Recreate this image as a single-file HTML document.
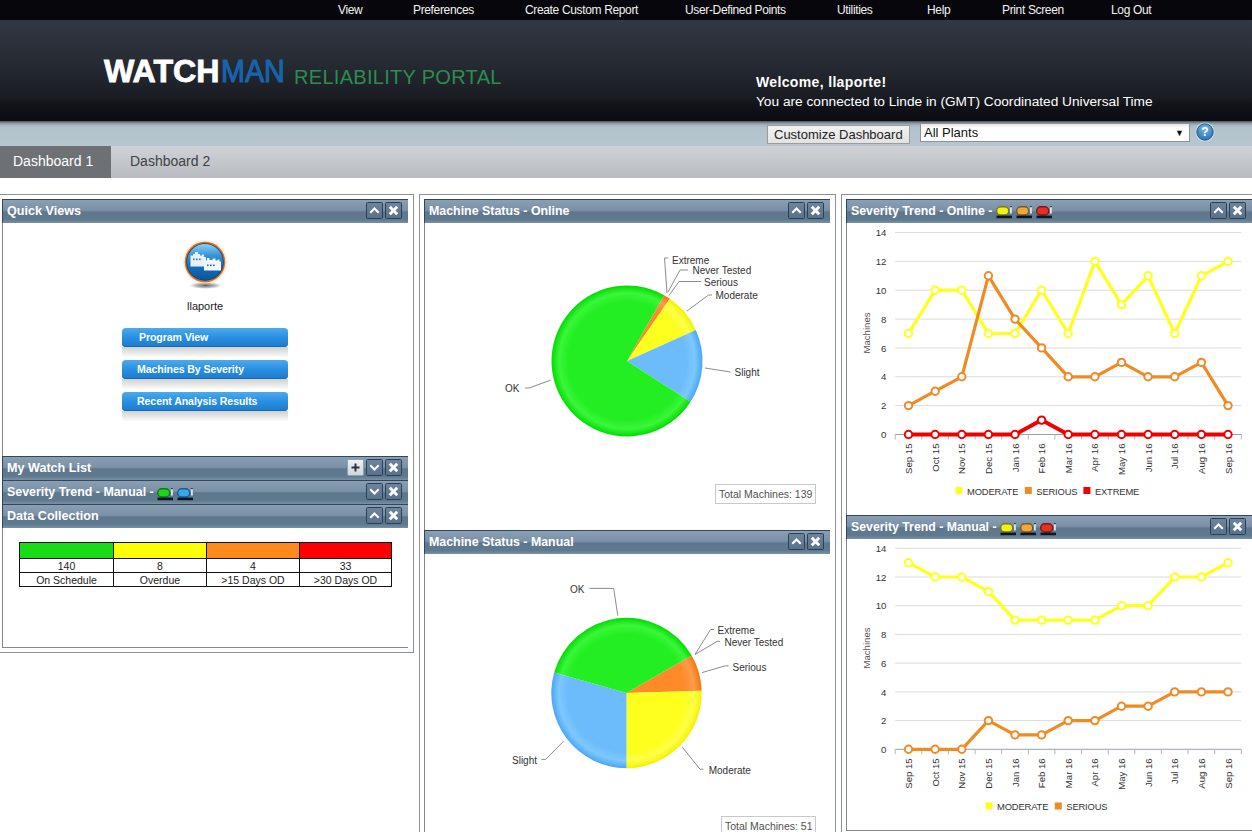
<!DOCTYPE html><html><head><meta charset="utf-8"><style>
*{box-sizing:border-box}
html,body{margin:0;padding:0}
body{width:1252px;height:832px;overflow:hidden;position:relative;background:#fff;font-family:"Liberation Sans",sans-serif}
.a{position:absolute}
#topnav{left:0;top:0;width:1252px;height:20px;background:#06060c}
#topnav span{position:absolute;top:3px;color:#f2f2f2;font-size:12px;letter-spacing:-0.35px;white-space:nowrap;line-height:14px}
#header{left:0;top:20px;width:1252px;height:101px;background:linear-gradient(#323843 0%,#272b34 40%,#1a1d23 76%,#111318 84%,#0b0c10 100%)}
#band{left:0;top:121px;width:1252px;height:25px;background:linear-gradient(#4a5258 0px,#84929a 2px,#a6b5be 4px,#b3c3cc 7px,#b6c5ce 100%)}
#tabs{left:0;top:146px;width:1252px;height:32px;background:linear-gradient(#cfd3d7,#b8bbbf)}
#tab1{left:0;top:146px;width:111px;height:32px;background:#6d7176;color:#fff;font-size:14px;line-height:30px;padding-left:13px;white-space:nowrap}
#tab2{left:130px;top:146px;color:#3f4247;font-size:14px;line-height:30px;white-space:nowrap}
.col{position:absolute;border:1px solid #8d9298;background:#fff}
.pl{position:absolute;border-left:1px solid #85898e;border-bottom:1px solid #85898e}
.ph{position:absolute;height:24px;border-top:1px solid #33475c;border-left:1px solid #33475c;background:linear-gradient(#8a9fb4 0%,#7a90a6 45%,#5f778d 52%,#5f798f 85%,#7a92a7 100%);color:#fff;font-weight:bold;font-size:12.6px;line-height:22px;padding-left:4px;white-space:nowrap}
.bt{position:absolute;top:2px;width:17px;height:17px;border:1px solid #2a3f58;border-radius:1.5px;background:linear-gradient(#6d849b,#5a7289)}
.bt svg{position:absolute;left:0;top:0}
.pt{font-size:10px;fill:#333}
</style></head><body>
<div id="topnav" class="a">
<span style="left:338px">View</span>
<span style="left:413px">Preferences</span>
<span style="left:525px">Create Custom Report</span>
<span style="left:685px">User-Defined Points</span>
<span style="left:837px">Utilities</span>
<span style="left:927px">Help</span>
<span style="left:1002px">Print Screen</span>
<span style="left:1111px">Log Out</span>
</div>
<div id="header" class="a"></div>
<div class="a" style="left:104px;top:52px;font-weight:bold;font-size:30.5px;line-height:38px;color:#fff;white-space:nowrap;-webkit-text-stroke:0.8px #fff;transform:scaleX(1.055);transform-origin:0 0">WATCH</div>
<div class="a" style="left:221px;top:52px;font-size:30.5px;line-height:38px;color:#1764aa;white-space:nowrap;-webkit-text-stroke:1.1px #1764aa;transform:scaleX(0.94);transform-origin:0 0">MAN</div>
<div class="a" style="left:294px;top:65px;font-size:20px;line-height:24px;color:#2d8c4e;letter-spacing:0.3px;white-space:nowrap">RELIABILITY PORTAL</div>
<div class="a" style="left:756px;top:74px;font-weight:bold;font-size:14px;line-height:17px;color:#fff;letter-spacing:0.35px;white-space:nowrap">Welcome, llaporte!</div>
<div class="a" style="left:756px;top:93px;font-size:13.7px;line-height:17px;color:#fff;white-space:nowrap">You are connected to Linde in (GMT) Coordinated Universal Time</div>
<div id="band" class="a"></div>
<div class="a" style="left:767px;top:125px;width:143px;height:19px;border:1px solid #9c9c9c;background:linear-gradient(#f2f2f2,#e2e2e2);font-size:13px;line-height:17px;color:#222;padding-left:6px;white-space:nowrap">Customize Dashboard</div>
<div class="a" style="left:920px;top:123px;width:270px;height:19px;border:1px solid #8e9295;background:linear-gradient(#e4e4e4 0px,#fff 4px,#fff 100%);font-size:13px;line-height:17px;color:#111;padding-left:3px;white-space:nowrap">All Plants<span style="position:absolute;right:5px;top:1px;font-size:9px">&#9660;</span></div>
<svg class="a" style="left:1195px;top:122px" width="20" height="20"><defs><radialGradient id="hg" cx="50%" cy="30%" r="65%"><stop offset="0" stop-color="#7fb8e6"/><stop offset="1" stop-color="#2d76b8"/></radialGradient></defs><circle cx="10" cy="10" r="9.5" fill="#d6e4ee"/><circle cx="10" cy="10" r="8.2" fill="url(#hg)" stroke="#21588e" stroke-width="1"/><text x="10" y="14.3" text-anchor="middle" font-family="Liberation Sans" font-weight="bold" font-size="12" fill="#fff">?</text></svg>
<div id="tabs" class="a"></div>
<div id="tab1" class="a">Dashboard 1</div>
<div id="tab2" class="a">Dashboard 2</div>
<div class="col" style="left:-1px;top:194px;width:415px;height:459px"></div>
<div class="col" style="left:419px;top:194px;width:417px;height:660px"></div>
<div class="col" style="left:841px;top:194px;width:420px;height:660px"></div>
<div class="pl" style="left:2px;top:199px;width:406px;height:449px"></div>
<div class="pl" style="left:424px;top:199px;width:406px;height:700px"></div>
<div class="pl" style="left:846px;top:199px;width:420px;height:632px"></div>
<div class="ph" style="left:2px;top:199px;width:406px;height:24px;font-size:12.6px">Quick Views<div class="bt" style="left:363px"><svg width="15" height="15"><path d="M4 9 L7.5 5.5 L11 9" stroke="#fff" stroke-width="2" fill="none" stroke-linecap="square"/></svg></div><div class="bt" style="left:382px"><svg width="15" height="15"><path d="M3.8 3.8 L11.2 11.2 M11.2 3.8 L3.8 11.2" stroke="#fff" stroke-width="2.9" fill="none" stroke-linecap="butt"/></svg></div></div>
<div class="ph" style="left:2px;top:456px;width:406px;height:24px;font-size:12.6px">My Watch List<div class="bt" style="left:344px;background:linear-gradient(#eef1f4,#cfd6dd);border-color:#8fa0b2"><svg width="15" height="15"><path d="M7.5 3.5 V11.5 M3.5 7.5 H11.5" stroke="#2a3440" stroke-width="2" fill="none"/></svg></div><div class="bt" style="left:363px"><svg width="15" height="15"><path d="M4 6 L7.5 9.5 L11 6" stroke="#fff" stroke-width="2" fill="none" stroke-linecap="square"/></svg></div><div class="bt" style="left:382px"><svg width="15" height="15"><path d="M3.8 3.8 L11.2 11.2 M11.2 3.8 L3.8 11.2" stroke="#fff" stroke-width="2.9" fill="none" stroke-linecap="butt"/></svg></div></div>
<div class="ph" style="left:2px;top:480px;width:406px;height:24px;font-size:12.4px">Severity Trend - Manual -<svg class="a" style="left:154px;top:7px" width="18" height="14"><rect x="0.7" y="0.7" width="12" height="8.3" rx="4" fill="#1ed21e" stroke="#0f7a1a" stroke-width="1.4"/><rect x="14" y="1" width="1.8" height="6.5" fill="#dde3ea"/><rect x="14" y="0" width="1.8" height="1.2" fill="#2a3a4a"/><rect x="0.5" y="9.6" width="15.5" height="2.6" fill="#0a1626"/></svg><svg class="a" style="left:174px;top:7px" width="18" height="14"><rect x="0.7" y="0.7" width="12" height="8.3" rx="4" fill="#3aa6ea" stroke="#1a5a95" stroke-width="1.4"/><rect x="14" y="1" width="1.8" height="6.5" fill="#dde3ea"/><rect x="14" y="0" width="1.8" height="1.2" fill="#2a3a4a"/><rect x="0.5" y="9.6" width="15.5" height="2.6" fill="#0a1626"/></svg><div class="bt" style="left:363px"><svg width="15" height="15"><path d="M4 6 L7.5 9.5 L11 6" stroke="#fff" stroke-width="2" fill="none" stroke-linecap="square"/></svg></div><div class="bt" style="left:382px"><svg width="15" height="15"><path d="M3.8 3.8 L11.2 11.2 M11.2 3.8 L3.8 11.2" stroke="#fff" stroke-width="2.9" fill="none" stroke-linecap="butt"/></svg></div></div>
<div class="ph" style="left:2px;top:504px;width:406px;height:24px;font-size:12.6px">Data Collection<div class="bt" style="left:363px"><svg width="15" height="15"><path d="M4 9 L7.5 5.5 L11 9" stroke="#fff" stroke-width="2" fill="none" stroke-linecap="square"/></svg></div><div class="bt" style="left:382px"><svg width="15" height="15"><path d="M3.8 3.8 L11.2 11.2 M11.2 3.8 L3.8 11.2" stroke="#fff" stroke-width="2.9" fill="none" stroke-linecap="butt"/></svg></div></div>
<svg class="a" style="left:180px;top:236px" width="52" height="56">
<defs>
<linearGradient id="gb" x1="0" y1="0" x2="0" y2="1"><stop offset="0" stop-color="#8ccff2"/><stop offset="0.3" stop-color="#3a98d8"/><stop offset="0.55" stop-color="#1676c0"/><stop offset="1" stop-color="#0a549a"/></linearGradient>
<radialGradient id="gs" cx="50%" cy="50%" r="50%"><stop offset="0" stop-color="#444" stop-opacity="0.85"/><stop offset="0.6" stop-color="#777" stop-opacity="0.5"/><stop offset="1" stop-color="#aaa" stop-opacity="0"/></radialGradient>
<radialGradient id="gg" cx="50%" cy="50%" r="50%"><stop offset="0.85" stop-color="#f09040" stop-opacity="0.35"/><stop offset="1" stop-color="#f09040" stop-opacity="0"/></radialGradient>
</defs>
<ellipse cx="25.5" cy="49.5" rx="17" ry="3.5" fill="url(#gs)"/>
<circle cx="25" cy="26" r="23" fill="url(#gg)"/>
<circle cx="25" cy="26" r="20.2" fill="#d27028"/>
<circle cx="25" cy="26" r="18.8" fill="#0f3f6e"/>
<circle cx="25" cy="26" r="18" fill="url(#gb)"/>
<path d="M10.5 19.5 h2.5 v-1.5 h2 v-2 h3 v2 h2 v1.5 h2 v-1 h2 v2.5 h2 v9.5 h-15.5 z" fill="#e6f1f9"/>
<path d="M24 24.5 h3 v-2.5 h2.5 v2 h3 v-1.5 h3 v2 h2 v-1 h2 v2 h1.5 v9 h-17 z" fill="#f2f7fb"/>
<rect x="13" y="22.5" width="1.6" height="1.6" fill="#3a6f9a"/><rect x="16" y="22.5" width="1.6" height="1.6" fill="#3a6f9a"/><rect x="19" y="22.5" width="1.6" height="1.6" fill="#3a6f9a"/>
<rect x="27" y="28.5" width="1.6" height="1.6" fill="#3a6f9a"/><rect x="30" y="28.5" width="1.6" height="1.6" fill="#3a6f9a"/><rect x="33" y="28.5" width="1.6" height="1.6" fill="#3a6f9a"/>
</svg>
<div class="a" style="left:187px;top:300px;font-size:11px;line-height:13px;color:#222;white-space:nowrap">llaporte</div>
<div class="a" style="left:122px;top:347px;width:166px;height:11px;background:linear-gradient(rgba(170,170,170,0.55),rgba(255,255,255,0));border-radius:0 0 3px 3px"></div>
<div class="a" style="left:122px;top:328px;width:166px;height:19px;border-radius:4px;background:linear-gradient(#4aaaf0 0%,#2a8fe0 50%,#1a7cd0 100%);box-shadow:inset 0 -1px 0 #1667b0;color:#fff;font-weight:bold;font-size:10.6px;line-height:18px;padding-left:17px;white-space:nowrap;letter-spacing:-0.1px">Program View</div>
<div class="a" style="left:122px;top:379px;width:166px;height:11px;background:linear-gradient(rgba(170,170,170,0.55),rgba(255,255,255,0));border-radius:0 0 3px 3px"></div>
<div class="a" style="left:122px;top:360px;width:166px;height:19px;border-radius:4px;background:linear-gradient(#4aaaf0 0%,#2a8fe0 50%,#1a7cd0 100%);box-shadow:inset 0 -1px 0 #1667b0;color:#fff;font-weight:bold;font-size:10.6px;line-height:18px;padding-left:15px;white-space:nowrap;letter-spacing:-0.1px">Machines By Severity</div>
<div class="a" style="left:122px;top:411px;width:166px;height:11px;background:linear-gradient(rgba(170,170,170,0.55),rgba(255,255,255,0));border-radius:0 0 3px 3px"></div>
<div class="a" style="left:122px;top:392px;width:166px;height:19px;border-radius:4px;background:linear-gradient(#4aaaf0 0%,#2a8fe0 50%,#1a7cd0 100%);box-shadow:inset 0 -1px 0 #1667b0;color:#fff;font-weight:bold;font-size:10.6px;line-height:18px;padding-left:15px;white-space:nowrap;letter-spacing:-0.1px">Recent Analysis Results</div>
<table class="a" style="left:19px;top:542px;width:373px;border-collapse:collapse;font-size:10.5px;color:#222;text-align:center">
<tr style="height:16px"><td style="border:1px solid #111;background:#17dc17;width:94px"></td><td style="border:1px solid #111;background:#ffff00;width:93px"></td><td style="border:1px solid #111;background:#ff8a1c;width:93px"></td><td style="border:1px solid #111;background:#ff0000"></td></tr>
<tr style="height:14px"><td style="border:1px solid #111;padding:0;line-height:12px">140</td><td style="border:1px solid #111;padding:0;line-height:12px">8</td><td style="border:1px solid #111;padding:0;line-height:12px">4</td><td style="border:1px solid #111;padding:0;line-height:12px">33</td></tr>
<tr style="height:14px"><td style="border:1px solid #111;padding:0;line-height:12px">On Schedule</td><td style="border:1px solid #111;padding:0;line-height:12px">Overdue</td><td style="border:1px solid #111;padding:0;line-height:12px">&gt;15 Days OD</td><td style="border:1px solid #111;padding:0;line-height:12px">&gt;30 Days OD</td></tr>
</table>
<div class="ph" style="left:424px;top:199px;width:406px;height:24px;font-size:12.4px">Machine Status - Online<div class="bt" style="left:363px"><svg width="15" height="15"><path d="M4 9 L7.5 5.5 L11 9" stroke="#fff" stroke-width="2" fill="none" stroke-linecap="square"/></svg></div><div class="bt" style="left:382px"><svg width="15" height="15"><path d="M3.8 3.8 L11.2 11.2 M11.2 3.8 L3.8 11.2" stroke="#fff" stroke-width="2.9" fill="none" stroke-linecap="butt"/></svg></div></div>
<div class="ph" style="left:424px;top:530px;width:406px;height:24px;font-size:12.4px">Machine Status - Manual<div class="bt" style="left:363px"><svg width="15" height="15"><path d="M4 9 L7.5 5.5 L11 9" stroke="#fff" stroke-width="2" fill="none" stroke-linecap="square"/></svg></div><div class="bt" style="left:382px"><svg width="15" height="15"><path d="M3.8 3.8 L11.2 11.2 M11.2 3.8 L3.8 11.2" stroke="#fff" stroke-width="2.9" fill="none" stroke-linecap="butt"/></svg></div></div>
<svg class="a" style="left:0;top:0" width="1252" height="832" overflow="visible"><defs><radialGradient id="p361ok" gradientUnits="userSpaceOnUse" cx="627" cy="361" r="75.5"><stop offset="0" stop-color="#22ee22"/><stop offset="0.78" stop-color="#22ee22"/><stop offset="0.9" stop-color="#3af63a"/><stop offset="1" stop-color="#02dc02"/></radialGradient><radialGradient id="p361slight" gradientUnits="userSpaceOnUse" cx="627" cy="361" r="75.5"><stop offset="0" stop-color="#6cbbfb"/><stop offset="0.78" stop-color="#6cbbfb"/><stop offset="0.9" stop-color="#7cc8ff"/><stop offset="1" stop-color="#4aa6f2"/></radialGradient><radialGradient id="p361moderate" gradientUnits="userSpaceOnUse" cx="627" cy="361" r="75.5"><stop offset="0" stop-color="#ffff1e"/><stop offset="0.78" stop-color="#ffff1e"/><stop offset="0.9" stop-color="#ffff4a"/><stop offset="1" stop-color="#f2f200"/></radialGradient><radialGradient id="p361serious" gradientUnits="userSpaceOnUse" cx="627" cy="361" r="75.5"><stop offset="0" stop-color="#ff8a2a"/><stop offset="0.78" stop-color="#ff8a2a"/><stop offset="0.9" stop-color="#ff9c48"/><stop offset="1" stop-color="#f27610"/></radialGradient></defs><path d="M627,361 L664.06,295.22 A75.5,75.5 0 0 1 669.85,298.84 Z" fill="url(#p361serious)"/><path d="M627,361 L669.85,298.84 A75.5,75.5 0 0 1 695.79,329.88 Z" fill="url(#p361moderate)"/><path d="M627,361 L695.79,329.88 A75.5,75.5 0 0 1 690.58,401.72 Z" fill="url(#p361slight)"/><path d="M627,361 L690.58,401.72 A75.5,75.5 0 1 1 664.06,295.22 Z" fill="url(#p361ok)"/><path d="M667,293 L664.5,258 L668,258" stroke="#8c8c8c" stroke-width="1" fill="none"/><text x="672" y="263.6" class="pt" font-family="Liberation Sans">Extreme</text><path d="M668,292 L680,270 L688,270" stroke="#8c8c8c" stroke-width="1" fill="none"/><text x="692.5" y="274.1" class="pt" font-family="Liberation Sans">Never Tested</text><path d="M669,295.5 L679,281.5 L701,281.5" stroke="#8c8c8c" stroke-width="1" fill="none"/><text x="704" y="286.3" class="pt" font-family="Liberation Sans">Serious</text><path d="M687,311 L708.5,295 L712,295" stroke="#8c8c8c" stroke-width="1" fill="none"/><text x="715.5" y="299.0" class="pt" font-family="Liberation Sans">Moderate</text><path d="M705,368 L730.5,372" stroke="#8c8c8c" stroke-width="1" fill="none"/><text x="734.5" y="376.40000000000003" class="pt" font-family="Liberation Sans">Slight</text><path d="M550.6,380.2 L529,388 L525,388" stroke="#8c8c8c" stroke-width="1" fill="none"/><text x="505" y="392.3" class="pt" font-family="Liberation Sans">OK</text><rect x="715.5" y="484.5" width="100" height="19" fill="#fff" stroke="#c8c8c8"/><text x="719" y="498" font-family="Liberation Sans" font-size="10.5" fill="#505050">Total Machines: 139</text></svg>
<svg class="a" style="left:0;top:0" width="1252" height="832" overflow="visible"><defs><radialGradient id="p693ok" gradientUnits="userSpaceOnUse" cx="626.5" cy="693" r="75.2"><stop offset="0" stop-color="#22ee22"/><stop offset="0.78" stop-color="#22ee22"/><stop offset="0.9" stop-color="#3af63a"/><stop offset="1" stop-color="#02dc02"/></radialGradient><radialGradient id="p693slight" gradientUnits="userSpaceOnUse" cx="626.5" cy="693" r="75.2"><stop offset="0" stop-color="#6cbbfb"/><stop offset="0.78" stop-color="#6cbbfb"/><stop offset="0.9" stop-color="#7cc8ff"/><stop offset="1" stop-color="#4aa6f2"/></radialGradient><radialGradient id="p693moderate" gradientUnits="userSpaceOnUse" cx="626.5" cy="693" r="75.2"><stop offset="0" stop-color="#ffff1e"/><stop offset="0.78" stop-color="#ffff1e"/><stop offset="0.9" stop-color="#ffff4a"/><stop offset="1" stop-color="#f2f200"/></radialGradient><radialGradient id="p693serious" gradientUnits="userSpaceOnUse" cx="626.5" cy="693" r="75.2"><stop offset="0" stop-color="#ff8a2a"/><stop offset="0.78" stop-color="#ff8a2a"/><stop offset="0.9" stop-color="#ff9c48"/><stop offset="1" stop-color="#f27610"/></radialGradient></defs><path d="M626.5,693 L691.63,655.40 A75.2,75.2 0 0 1 701.66,690.68 Z" fill="url(#p693serious)"/><path d="M626.5,693 L701.66,690.68 A75.2,75.2 0 0 1 626.50,768.20 Z" fill="url(#p693moderate)"/><path d="M626.5,693 L626.50,768.20 A75.2,75.2 0 0 1 554.17,672.42 Z" fill="url(#p693slight)"/><path d="M626.5,693 L554.17,672.42 A75.2,75.2 0 0 1 691.63,655.40 Z" fill="url(#p693ok)"/><path d="M617.8,615.6 L613.7,588.4 L589.4,588.4" stroke="#8c8c8c" stroke-width="1" fill="none"/><text x="570" y="593.2" class="pt" font-family="Liberation Sans">OK</text><path d="M695,654.5 L710.5,629.5 L714,629.5" stroke="#8c8c8c" stroke-width="1" fill="none"/><text x="717.5" y="634.2" class="pt" font-family="Liberation Sans">Extreme</text><path d="M695,654.5 L717,641.4 L720,641.4" stroke="#8c8c8c" stroke-width="1" fill="none"/><text x="724.5" y="646.4" class="pt" font-family="Liberation Sans">Never Tested</text><path d="M702,672.6 L725.4,665.8 L728.5,665.8" stroke="#8c8c8c" stroke-width="1" fill="none"/><text x="732.5" y="670.5" class="pt" font-family="Liberation Sans">Serious</text><path d="M563.6,741.2 L545.7,759.4 L541.5,759.4" stroke="#8c8c8c" stroke-width="1" fill="none"/><text x="512" y="764.1" class="pt" font-family="Liberation Sans">Slight</text><path d="M682.4,747.2 L700,769.2 L703.5,769.2" stroke="#8c8c8c" stroke-width="1" fill="none"/><text x="708.7" y="774.1" class="pt" font-family="Liberation Sans">Moderate</text><rect x="721.5" y="816.5" width="94" height="19" fill="#fff" stroke="#c8c8c8"/><text x="725" y="830" font-family="Liberation Sans" font-size="10.5" fill="#505050">Total Machines: 51</text></svg>
<div class="ph" style="left:846px;top:199px;width:410px;height:24px;font-size:12.3px">Severity Trend - Online -<svg class="a" style="left:149px;top:6px" width="18" height="14"><rect x="0.7" y="0.7" width="12" height="8.3" rx="4" fill="#f0f020" stroke="#7a7a10" stroke-width="1.4"/><rect x="14" y="1" width="1.8" height="6.5" fill="#dde3ea"/><rect x="14" y="0" width="1.8" height="1.2" fill="#2a3a4a"/><rect x="0.5" y="9.6" width="15.5" height="2.6" fill="#0a1626"/></svg><svg class="a" style="left:169px;top:6px" width="18" height="14"><rect x="0.7" y="0.7" width="12" height="8.3" rx="4" fill="#f0a838" stroke="#7a5a20" stroke-width="1.4"/><rect x="14" y="1" width="1.8" height="6.5" fill="#dde3ea"/><rect x="14" y="0" width="1.8" height="1.2" fill="#2a3a4a"/><rect x="0.5" y="9.6" width="15.5" height="2.6" fill="#0a1626"/></svg><svg class="a" style="left:189px;top:6px" width="18" height="14"><rect x="0.7" y="0.7" width="12" height="8.3" rx="4" fill="#e83020" stroke="#7a1a10" stroke-width="1.4"/><rect x="14" y="1" width="1.8" height="6.5" fill="#dde3ea"/><rect x="14" y="0" width="1.8" height="1.2" fill="#2a3a4a"/><rect x="0.5" y="9.6" width="15.5" height="2.6" fill="#0a1626"/></svg><div class="bt" style="left:363px"><svg width="15" height="15"><path d="M4 9 L7.5 5.5 L11 9" stroke="#fff" stroke-width="2" fill="none" stroke-linecap="square"/></svg></div><div class="bt" style="left:382px"><svg width="15" height="15"><path d="M3.8 3.8 L11.2 11.2 M11.2 3.8 L3.8 11.2" stroke="#fff" stroke-width="2.9" fill="none" stroke-linecap="butt"/></svg></div></div>
<div class="ph" style="left:846px;top:515px;width:410px;height:24px;font-size:12.3px">Severity Trend - Manual -<svg class="a" style="left:153px;top:7px" width="18" height="14"><rect x="0.7" y="0.7" width="12" height="8.3" rx="4" fill="#f0f020" stroke="#7a7a10" stroke-width="1.4"/><rect x="14" y="1" width="1.8" height="6.5" fill="#dde3ea"/><rect x="14" y="0" width="1.8" height="1.2" fill="#2a3a4a"/><rect x="0.5" y="9.6" width="15.5" height="2.6" fill="#0a1626"/></svg><svg class="a" style="left:173px;top:7px" width="18" height="14"><rect x="0.7" y="0.7" width="12" height="8.3" rx="4" fill="#f0a838" stroke="#7a5a20" stroke-width="1.4"/><rect x="14" y="1" width="1.8" height="6.5" fill="#dde3ea"/><rect x="14" y="0" width="1.8" height="1.2" fill="#2a3a4a"/><rect x="0.5" y="9.6" width="15.5" height="2.6" fill="#0a1626"/></svg><svg class="a" style="left:193px;top:7px" width="18" height="14"><rect x="0.7" y="0.7" width="12" height="8.3" rx="4" fill="#e83020" stroke="#7a1a10" stroke-width="1.4"/><rect x="14" y="1" width="1.8" height="6.5" fill="#dde3ea"/><rect x="14" y="0" width="1.8" height="1.2" fill="#2a3a4a"/><rect x="0.5" y="9.6" width="15.5" height="2.6" fill="#0a1626"/></svg><div class="bt" style="left:363px"><svg width="15" height="15"><path d="M4 9 L7.5 5.5 L11 9" stroke="#fff" stroke-width="2" fill="none" stroke-linecap="square"/></svg></div><div class="bt" style="left:382px"><svg width="15" height="15"><path d="M3.8 3.8 L11.2 11.2 M11.2 3.8 L3.8 11.2" stroke="#fff" stroke-width="2.9" fill="none" stroke-linecap="butt"/></svg></div></div>
<svg class="a" style="left:0;top:0" width="1252" height="832"><text x="886.3" y="438.1" text-anchor="end" font-family="Liberation Sans" font-size="9.6" fill="#333">0</text><line x1="895.2" y1="405.6" x2="1241.3" y2="405.6" stroke="#dcdcdc" stroke-width="1"/><text x="886.3" y="409.2" text-anchor="end" font-family="Liberation Sans" font-size="9.6" fill="#333">2</text><line x1="895.2" y1="376.8" x2="1241.3" y2="376.8" stroke="#dcdcdc" stroke-width="1"/><text x="886.3" y="380.4" text-anchor="end" font-family="Liberation Sans" font-size="9.6" fill="#333">4</text><line x1="895.2" y1="347.9" x2="1241.3" y2="347.9" stroke="#dcdcdc" stroke-width="1"/><text x="886.3" y="351.5" text-anchor="end" font-family="Liberation Sans" font-size="9.6" fill="#333">6</text><line x1="895.2" y1="319.1" x2="1241.3" y2="319.1" stroke="#dcdcdc" stroke-width="1"/><text x="886.3" y="322.7" text-anchor="end" font-family="Liberation Sans" font-size="9.6" fill="#333">8</text><line x1="895.2" y1="290.2" x2="1241.3" y2="290.2" stroke="#dcdcdc" stroke-width="1"/><text x="886.3" y="293.8" text-anchor="end" font-family="Liberation Sans" font-size="9.6" fill="#333">10</text><line x1="895.2" y1="261.4" x2="1241.3" y2="261.4" stroke="#dcdcdc" stroke-width="1"/><text x="886.3" y="265.0" text-anchor="end" font-family="Liberation Sans" font-size="9.6" fill="#333">12</text><line x1="895.2" y1="232.5" x2="1241.3" y2="232.5" stroke="#dcdcdc" stroke-width="1"/><text x="886.3" y="236.1" text-anchor="end" font-family="Liberation Sans" font-size="9.6" fill="#333">14</text><line x1="895.2" y1="434.5" x2="1241.3" y2="434.5" stroke="#9aa0a8" stroke-width="1"/><line x1="895.2" y1="434.5" x2="895.2" y2="439.5" stroke="#b4b8bd" stroke-width="1"/><line x1="921.8" y1="434.5" x2="921.8" y2="439.5" stroke="#b4b8bd" stroke-width="1"/><line x1="948.4" y1="434.5" x2="948.4" y2="439.5" stroke="#b4b8bd" stroke-width="1"/><line x1="975.1" y1="434.5" x2="975.1" y2="439.5" stroke="#b4b8bd" stroke-width="1"/><line x1="1001.7" y1="434.5" x2="1001.7" y2="439.5" stroke="#b4b8bd" stroke-width="1"/><line x1="1028.3" y1="434.5" x2="1028.3" y2="439.5" stroke="#b4b8bd" stroke-width="1"/><line x1="1054.9" y1="434.5" x2="1054.9" y2="439.5" stroke="#b4b8bd" stroke-width="1"/><line x1="1081.6" y1="434.5" x2="1081.6" y2="439.5" stroke="#b4b8bd" stroke-width="1"/><line x1="1108.2" y1="434.5" x2="1108.2" y2="439.5" stroke="#b4b8bd" stroke-width="1"/><line x1="1134.8" y1="434.5" x2="1134.8" y2="439.5" stroke="#b4b8bd" stroke-width="1"/><line x1="1161.4" y1="434.5" x2="1161.4" y2="439.5" stroke="#b4b8bd" stroke-width="1"/><line x1="1188.1" y1="434.5" x2="1188.1" y2="439.5" stroke="#b4b8bd" stroke-width="1"/><line x1="1214.7" y1="434.5" x2="1214.7" y2="439.5" stroke="#b4b8bd" stroke-width="1"/><line x1="1241.3" y1="434.5" x2="1241.3" y2="439.5" stroke="#b4b8bd" stroke-width="1"/><text transform="translate(912.0,443.5) rotate(-90)" text-anchor="end" font-family="Liberation Sans" font-size="9.6" fill="#333">Sep 15</text><text transform="translate(938.6,443.5) rotate(-90)" text-anchor="end" font-family="Liberation Sans" font-size="9.6" fill="#333">Oct 15</text><text transform="translate(965.3,443.5) rotate(-90)" text-anchor="end" font-family="Liberation Sans" font-size="9.6" fill="#333">Nov 15</text><text transform="translate(991.9,443.5) rotate(-90)" text-anchor="end" font-family="Liberation Sans" font-size="9.6" fill="#333">Dec 15</text><text transform="translate(1018.5,443.5) rotate(-90)" text-anchor="end" font-family="Liberation Sans" font-size="9.6" fill="#333">Jan 16</text><text transform="translate(1045.1,443.5) rotate(-90)" text-anchor="end" font-family="Liberation Sans" font-size="9.6" fill="#333">Feb 16</text><text transform="translate(1071.8,443.5) rotate(-90)" text-anchor="end" font-family="Liberation Sans" font-size="9.6" fill="#333">Mar 16</text><text transform="translate(1098.4,443.5) rotate(-90)" text-anchor="end" font-family="Liberation Sans" font-size="9.6" fill="#333">Apr 16</text><text transform="translate(1125.0,443.5) rotate(-90)" text-anchor="end" font-family="Liberation Sans" font-size="9.6" fill="#333">May 16</text><text transform="translate(1151.6,443.5) rotate(-90)" text-anchor="end" font-family="Liberation Sans" font-size="9.6" fill="#333">Jun 16</text><text transform="translate(1178.2,443.5) rotate(-90)" text-anchor="end" font-family="Liberation Sans" font-size="9.6" fill="#333">Jul 16</text><text transform="translate(1204.9,443.5) rotate(-90)" text-anchor="end" font-family="Liberation Sans" font-size="9.6" fill="#333">Aug 16</text><text transform="translate(1231.5,443.5) rotate(-90)" text-anchor="end" font-family="Liberation Sans" font-size="9.6" fill="#333">Sep 16</text><text transform="translate(870,333) rotate(-90)" text-anchor="middle" font-family="Liberation Sans" font-size="9.6" fill="#555">Machines</text><path d="M908.5,333.5 L935.1,290.2 L961.8,290.2 L988.4,333.5 L1015.0,333.5 L1041.6,290.2 L1068.2,333.5 L1094.9,261.4 L1121.5,304.6 L1148.1,275.8 L1174.7,333.5 L1201.4,275.8 L1228.0,261.4" stroke="#ffff1e" stroke-width="3.2" fill="none" stroke-linejoin="round"/><circle cx="908.5" cy="333.5" r="3.7" fill="#fff" stroke="#ffff1e" stroke-width="2"/><circle cx="935.1" cy="290.2" r="3.7" fill="#fff" stroke="#ffff1e" stroke-width="2"/><circle cx="961.8" cy="290.2" r="3.7" fill="#fff" stroke="#ffff1e" stroke-width="2"/><circle cx="988.4" cy="333.5" r="3.7" fill="#fff" stroke="#ffff1e" stroke-width="2"/><circle cx="1015.0" cy="333.5" r="3.7" fill="#fff" stroke="#ffff1e" stroke-width="2"/><circle cx="1041.6" cy="290.2" r="3.7" fill="#fff" stroke="#ffff1e" stroke-width="2"/><circle cx="1068.2" cy="333.5" r="3.7" fill="#fff" stroke="#ffff1e" stroke-width="2"/><circle cx="1094.9" cy="261.4" r="3.7" fill="#fff" stroke="#ffff1e" stroke-width="2"/><circle cx="1121.5" cy="304.6" r="3.7" fill="#fff" stroke="#ffff1e" stroke-width="2"/><circle cx="1148.1" cy="275.8" r="3.7" fill="#fff" stroke="#ffff1e" stroke-width="2"/><circle cx="1174.7" cy="333.5" r="3.7" fill="#fff" stroke="#ffff1e" stroke-width="2"/><circle cx="1201.4" cy="275.8" r="3.7" fill="#fff" stroke="#ffff1e" stroke-width="2"/><circle cx="1228.0" cy="261.4" r="3.7" fill="#fff" stroke="#ffff1e" stroke-width="2"/><path d="M908.5,405.6 L935.1,391.2 L961.8,376.8 L988.4,275.8 L1015.0,319.1 L1041.6,347.9 L1068.2,376.8 L1094.9,376.8 L1121.5,362.4 L1148.1,376.8 L1174.7,376.8 L1201.4,362.4 L1228.0,405.6" stroke="#f08a24" stroke-width="3.2" fill="none" stroke-linejoin="round"/><circle cx="908.5" cy="405.6" r="3.7" fill="#fff" stroke="#f08a24" stroke-width="2"/><circle cx="935.1" cy="391.2" r="3.7" fill="#fff" stroke="#f08a24" stroke-width="2"/><circle cx="961.8" cy="376.8" r="3.7" fill="#fff" stroke="#f08a24" stroke-width="2"/><circle cx="988.4" cy="275.8" r="3.7" fill="#fff" stroke="#f08a24" stroke-width="2"/><circle cx="1015.0" cy="319.1" r="3.7" fill="#fff" stroke="#f08a24" stroke-width="2"/><circle cx="1041.6" cy="347.9" r="3.7" fill="#fff" stroke="#f08a24" stroke-width="2"/><circle cx="1068.2" cy="376.8" r="3.7" fill="#fff" stroke="#f08a24" stroke-width="2"/><circle cx="1094.9" cy="376.8" r="3.7" fill="#fff" stroke="#f08a24" stroke-width="2"/><circle cx="1121.5" cy="362.4" r="3.7" fill="#fff" stroke="#f08a24" stroke-width="2"/><circle cx="1148.1" cy="376.8" r="3.7" fill="#fff" stroke="#f08a24" stroke-width="2"/><circle cx="1174.7" cy="376.8" r="3.7" fill="#fff" stroke="#f08a24" stroke-width="2"/><circle cx="1201.4" cy="362.4" r="3.7" fill="#fff" stroke="#f08a24" stroke-width="2"/><circle cx="1228.0" cy="405.6" r="3.7" fill="#fff" stroke="#f08a24" stroke-width="2"/><path d="M908.5,434.5 L935.1,434.5 L961.8,434.5 L988.4,434.5 L1015.0,434.5 L1041.6,420.1 L1068.2,434.5 L1094.9,434.5 L1121.5,434.5 L1148.1,434.5 L1174.7,434.5 L1201.4,434.5 L1228.0,434.5" stroke="#f20000" stroke-width="4" fill="none" stroke-linejoin="round"/><circle cx="908.5" cy="434.5" r="3.7" fill="#fff" stroke="#f20000" stroke-width="2"/><circle cx="935.1" cy="434.5" r="3.7" fill="#fff" stroke="#f20000" stroke-width="2"/><circle cx="961.8" cy="434.5" r="3.7" fill="#fff" stroke="#f20000" stroke-width="2"/><circle cx="988.4" cy="434.5" r="3.7" fill="#fff" stroke="#f20000" stroke-width="2"/><circle cx="1015.0" cy="434.5" r="3.7" fill="#fff" stroke="#f20000" stroke-width="2"/><circle cx="1041.6" cy="420.1" r="3.7" fill="#fff" stroke="#f20000" stroke-width="2"/><circle cx="1068.2" cy="434.5" r="3.7" fill="#fff" stroke="#f20000" stroke-width="2"/><circle cx="1094.9" cy="434.5" r="3.7" fill="#fff" stroke="#f20000" stroke-width="2"/><circle cx="1121.5" cy="434.5" r="3.7" fill="#fff" stroke="#f20000" stroke-width="2"/><circle cx="1148.1" cy="434.5" r="3.7" fill="#fff" stroke="#f20000" stroke-width="2"/><circle cx="1174.7" cy="434.5" r="3.7" fill="#fff" stroke="#f20000" stroke-width="2"/><circle cx="1201.4" cy="434.5" r="3.7" fill="#fff" stroke="#f20000" stroke-width="2"/><circle cx="1228.0" cy="434.5" r="3.7" fill="#fff" stroke="#f20000" stroke-width="2"/><rect x="955.5" y="487" width="7" height="7" fill="#ffff1e"/><text x="967.0" y="494.5" font-family="Liberation Sans" font-size="9.4" fill="#333" letter-spacing="-0.15">MODERATE</text><rect x="1024.8" y="487" width="7" height="7" fill="#f08a24"/><text x="1036.3" y="494.5" font-family="Liberation Sans" font-size="9.4" fill="#333" letter-spacing="-0.15">SERIOUS</text><rect x="1083.3999999999999" y="487" width="7" height="7" fill="#f20000"/><text x="1094.8999999999999" y="494.5" font-family="Liberation Sans" font-size="9.4" fill="#333" letter-spacing="-0.15">EXTREME</text></svg>
<svg class="a" style="left:0;top:0" width="1252" height="832"><text x="886.3" y="752.9" text-anchor="end" font-family="Liberation Sans" font-size="9.6" fill="#333">0</text><line x1="895.2" y1="720.6" x2="1241.3" y2="720.6" stroke="#dcdcdc" stroke-width="1"/><text x="886.3" y="724.2" text-anchor="end" font-family="Liberation Sans" font-size="9.6" fill="#333">2</text><line x1="895.2" y1="691.9" x2="1241.3" y2="691.9" stroke="#dcdcdc" stroke-width="1"/><text x="886.3" y="695.5" text-anchor="end" font-family="Liberation Sans" font-size="9.6" fill="#333">4</text><line x1="895.2" y1="663.2" x2="1241.3" y2="663.2" stroke="#dcdcdc" stroke-width="1"/><text x="886.3" y="666.8" text-anchor="end" font-family="Liberation Sans" font-size="9.6" fill="#333">6</text><line x1="895.2" y1="634.4" x2="1241.3" y2="634.4" stroke="#dcdcdc" stroke-width="1"/><text x="886.3" y="638.0" text-anchor="end" font-family="Liberation Sans" font-size="9.6" fill="#333">8</text><line x1="895.2" y1="605.7" x2="1241.3" y2="605.7" stroke="#dcdcdc" stroke-width="1"/><text x="886.3" y="609.3" text-anchor="end" font-family="Liberation Sans" font-size="9.6" fill="#333">10</text><line x1="895.2" y1="577.0" x2="1241.3" y2="577.0" stroke="#dcdcdc" stroke-width="1"/><text x="886.3" y="580.6" text-anchor="end" font-family="Liberation Sans" font-size="9.6" fill="#333">12</text><line x1="895.2" y1="548.3" x2="1241.3" y2="548.3" stroke="#dcdcdc" stroke-width="1"/><text x="886.3" y="551.9" text-anchor="end" font-family="Liberation Sans" font-size="9.6" fill="#333">14</text><line x1="895.2" y1="749.3" x2="1241.3" y2="749.3" stroke="#9aa0a8" stroke-width="1"/><line x1="895.2" y1="749.3" x2="895.2" y2="754.3" stroke="#b4b8bd" stroke-width="1"/><line x1="921.8" y1="749.3" x2="921.8" y2="754.3" stroke="#b4b8bd" stroke-width="1"/><line x1="948.4" y1="749.3" x2="948.4" y2="754.3" stroke="#b4b8bd" stroke-width="1"/><line x1="975.1" y1="749.3" x2="975.1" y2="754.3" stroke="#b4b8bd" stroke-width="1"/><line x1="1001.7" y1="749.3" x2="1001.7" y2="754.3" stroke="#b4b8bd" stroke-width="1"/><line x1="1028.3" y1="749.3" x2="1028.3" y2="754.3" stroke="#b4b8bd" stroke-width="1"/><line x1="1054.9" y1="749.3" x2="1054.9" y2="754.3" stroke="#b4b8bd" stroke-width="1"/><line x1="1081.6" y1="749.3" x2="1081.6" y2="754.3" stroke="#b4b8bd" stroke-width="1"/><line x1="1108.2" y1="749.3" x2="1108.2" y2="754.3" stroke="#b4b8bd" stroke-width="1"/><line x1="1134.8" y1="749.3" x2="1134.8" y2="754.3" stroke="#b4b8bd" stroke-width="1"/><line x1="1161.4" y1="749.3" x2="1161.4" y2="754.3" stroke="#b4b8bd" stroke-width="1"/><line x1="1188.1" y1="749.3" x2="1188.1" y2="754.3" stroke="#b4b8bd" stroke-width="1"/><line x1="1214.7" y1="749.3" x2="1214.7" y2="754.3" stroke="#b4b8bd" stroke-width="1"/><line x1="1241.3" y1="749.3" x2="1241.3" y2="754.3" stroke="#b4b8bd" stroke-width="1"/><text transform="translate(912.0,758.3) rotate(-90)" text-anchor="end" font-family="Liberation Sans" font-size="9.6" fill="#333">Sep 15</text><text transform="translate(938.6,758.3) rotate(-90)" text-anchor="end" font-family="Liberation Sans" font-size="9.6" fill="#333">Oct 15</text><text transform="translate(965.3,758.3) rotate(-90)" text-anchor="end" font-family="Liberation Sans" font-size="9.6" fill="#333">Nov 15</text><text transform="translate(991.9,758.3) rotate(-90)" text-anchor="end" font-family="Liberation Sans" font-size="9.6" fill="#333">Dec 15</text><text transform="translate(1018.5,758.3) rotate(-90)" text-anchor="end" font-family="Liberation Sans" font-size="9.6" fill="#333">Jan 16</text><text transform="translate(1045.1,758.3) rotate(-90)" text-anchor="end" font-family="Liberation Sans" font-size="9.6" fill="#333">Feb 16</text><text transform="translate(1071.8,758.3) rotate(-90)" text-anchor="end" font-family="Liberation Sans" font-size="9.6" fill="#333">Mar 16</text><text transform="translate(1098.4,758.3) rotate(-90)" text-anchor="end" font-family="Liberation Sans" font-size="9.6" fill="#333">Apr 16</text><text transform="translate(1125.0,758.3) rotate(-90)" text-anchor="end" font-family="Liberation Sans" font-size="9.6" fill="#333">May 16</text><text transform="translate(1151.6,758.3) rotate(-90)" text-anchor="end" font-family="Liberation Sans" font-size="9.6" fill="#333">Jun 16</text><text transform="translate(1178.2,758.3) rotate(-90)" text-anchor="end" font-family="Liberation Sans" font-size="9.6" fill="#333">Jul 16</text><text transform="translate(1204.9,758.3) rotate(-90)" text-anchor="end" font-family="Liberation Sans" font-size="9.6" fill="#333">Aug 16</text><text transform="translate(1231.5,758.3) rotate(-90)" text-anchor="end" font-family="Liberation Sans" font-size="9.6" fill="#333">Sep 16</text><text transform="translate(870,648) rotate(-90)" text-anchor="middle" font-family="Liberation Sans" font-size="9.6" fill="#555">Machines</text><path d="M908.5,562.7 L935.1,577.0 L961.8,577.0 L988.4,591.4 L1015.0,620.1 L1041.6,620.1 L1068.2,620.1 L1094.9,620.1 L1121.5,605.7 L1148.1,605.7 L1174.7,577.0 L1201.4,577.0 L1228.0,562.7" stroke="#ffff1e" stroke-width="3.2" fill="none" stroke-linejoin="round"/><circle cx="908.5" cy="562.7" r="3.7" fill="#fff" stroke="#ffff1e" stroke-width="2"/><circle cx="935.1" cy="577.0" r="3.7" fill="#fff" stroke="#ffff1e" stroke-width="2"/><circle cx="961.8" cy="577.0" r="3.7" fill="#fff" stroke="#ffff1e" stroke-width="2"/><circle cx="988.4" cy="591.4" r="3.7" fill="#fff" stroke="#ffff1e" stroke-width="2"/><circle cx="1015.0" cy="620.1" r="3.7" fill="#fff" stroke="#ffff1e" stroke-width="2"/><circle cx="1041.6" cy="620.1" r="3.7" fill="#fff" stroke="#ffff1e" stroke-width="2"/><circle cx="1068.2" cy="620.1" r="3.7" fill="#fff" stroke="#ffff1e" stroke-width="2"/><circle cx="1094.9" cy="620.1" r="3.7" fill="#fff" stroke="#ffff1e" stroke-width="2"/><circle cx="1121.5" cy="605.7" r="3.7" fill="#fff" stroke="#ffff1e" stroke-width="2"/><circle cx="1148.1" cy="605.7" r="3.7" fill="#fff" stroke="#ffff1e" stroke-width="2"/><circle cx="1174.7" cy="577.0" r="3.7" fill="#fff" stroke="#ffff1e" stroke-width="2"/><circle cx="1201.4" cy="577.0" r="3.7" fill="#fff" stroke="#ffff1e" stroke-width="2"/><circle cx="1228.0" cy="562.7" r="3.7" fill="#fff" stroke="#ffff1e" stroke-width="2"/><path d="M908.5,749.3 L935.1,749.3 L961.8,749.3 L988.4,720.6 L1015.0,734.9 L1041.6,734.9 L1068.2,720.6 L1094.9,720.6 L1121.5,706.2 L1148.1,706.2 L1174.7,691.9 L1201.4,691.9 L1228.0,691.9" stroke="#f08a24" stroke-width="3.2" fill="none" stroke-linejoin="round"/><circle cx="908.5" cy="749.3" r="3.7" fill="#fff" stroke="#f08a24" stroke-width="2"/><circle cx="935.1" cy="749.3" r="3.7" fill="#fff" stroke="#f08a24" stroke-width="2"/><circle cx="961.8" cy="749.3" r="3.7" fill="#fff" stroke="#f08a24" stroke-width="2"/><circle cx="988.4" cy="720.6" r="3.7" fill="#fff" stroke="#f08a24" stroke-width="2"/><circle cx="1015.0" cy="734.9" r="3.7" fill="#fff" stroke="#f08a24" stroke-width="2"/><circle cx="1041.6" cy="734.9" r="3.7" fill="#fff" stroke="#f08a24" stroke-width="2"/><circle cx="1068.2" cy="720.6" r="3.7" fill="#fff" stroke="#f08a24" stroke-width="2"/><circle cx="1094.9" cy="720.6" r="3.7" fill="#fff" stroke="#f08a24" stroke-width="2"/><circle cx="1121.5" cy="706.2" r="3.7" fill="#fff" stroke="#f08a24" stroke-width="2"/><circle cx="1148.1" cy="706.2" r="3.7" fill="#fff" stroke="#f08a24" stroke-width="2"/><circle cx="1174.7" cy="691.9" r="3.7" fill="#fff" stroke="#f08a24" stroke-width="2"/><circle cx="1201.4" cy="691.9" r="3.7" fill="#fff" stroke="#f08a24" stroke-width="2"/><circle cx="1228.0" cy="691.9" r="3.7" fill="#fff" stroke="#f08a24" stroke-width="2"/><rect x="985.5" y="802.5" width="7" height="7" fill="#ffff1e"/><text x="997.0" y="810.0" font-family="Liberation Sans" font-size="9.4" fill="#333" letter-spacing="-0.15">MODERATE</text><rect x="1054.8" y="802.5" width="7" height="7" fill="#f08a24"/><text x="1066.3" y="810.0" font-family="Liberation Sans" font-size="9.4" fill="#333" letter-spacing="-0.15">SERIOUS</text></svg>
</body></html>
